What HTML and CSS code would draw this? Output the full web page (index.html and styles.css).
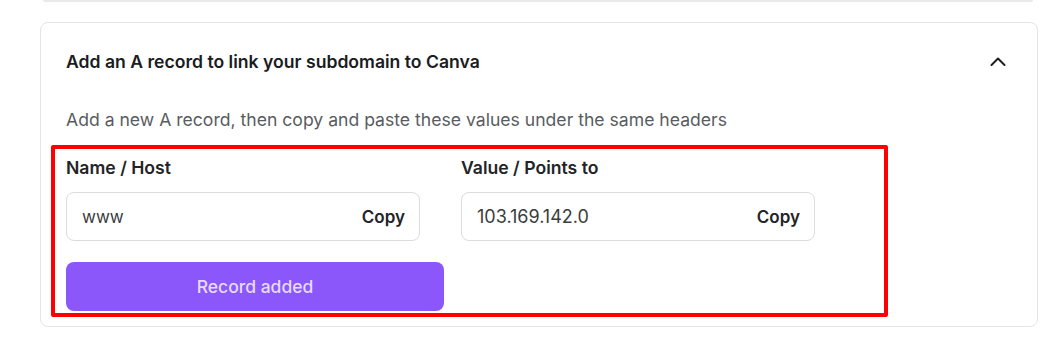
FILE: index.html
```html
<!DOCTYPE html>
<html>
<head>
    <title>Connect subdomain</title>
    <link rel="stylesheet" href="styles.css">
</head>
<body>
    <div class="page">
        <div class="prev-card"></div>

        <div class="card">
            <div class="card-header">
                <h2>Add an A record to link your subdomain to Canva</h2>
                <svg class="chevron" width="24" height="24" viewBox="0 0 24 24">
                    <path d="M5.5 15 L12 8.5 L18.5 15" fill="none" stroke="#1e1e1e" stroke-width="2" stroke-linecap="round" stroke-linejoin="round"/>
                </svg>
            </div>

            <p class="hint">Add a new A record, then copy and paste these values under the same headers</p>

            <div class="highlight">
                <div class="fields">
                    <div class="field">
                        <label>Name / Host</label>
                        <div class="value-box">
                            <span class="value">www</span>
                            <span class="copy">Copy</span>
                        </div>
                    </div>
                    <div class="field">
                        <label>Value / Points to</label>
                        <div class="value-box">
                            <span class="value ip">103.169.142.0</span>
                            <span class="copy">Copy</span>
                        </div>
                    </div>
                </div>
                <button class="added">Record added</button>
            </div>
        </div>
    </div>
</body>
</html>
```
FILE: styles.css
```css
body {
    margin: 0;
    font-family: Inter, "Noto Sans", sans-serif;
    background-color: #fff;
    color: #1d1f21;
}

.page {
    padding: 0 15px 0 40px;
}

.prev-card {
    height: 2px;
    margin: 0 5px 20px 3px;
    background-color: #e9e9e9;
    border-radius: 0 0 6px 6px;
}

.card {
    border: 1px solid #e4e4e4;
    border-radius: 8px;
    padding: 27px 25px 9px 25px;
}

.card-header {
    display: flex;
    justify-content: space-between;
    align-items: center;
}

.card-header h2 {
    margin: 0;
    font-size: 17.6px;
    line-height: 24px;
    font-weight: 600;
    color: #1a1c1e;
}

.chevron {
    margin-right: 2px;
}

.hint {
    margin: 34px 0 0 0;
    font-size: 17.6px;
    line-height: 24px;
    color: #595c5f;
}

.highlight {
    margin: 13px 0 0 -15px;
    width: 837px;
    box-sizing: border-box;
    border: 4px solid #ff0000;
    border-radius: 2px;
    padding: 7px 11px 2px 11px;
}

.fields {
    display: grid;
    grid-template-columns: 354px 354px;
    column-gap: 41px;
}

.field label {
    display: block;
    font-size: 17.6px;
    line-height: 24px;
    font-weight: 600;
    color: #222426;
    margin-bottom: 12px;
}

.value-box {
    display: flex;
    justify-content: space-between;
    align-items: center;
    height: 49px;
    box-sizing: border-box;
    border: 1px solid #dcdcdc;
    border-radius: 8px;
    padding: 0 14px 0 15px;
}

.value {
    font-size: 17px;
    color: #3a3c3e;
}

.value.ip {
    font-size: 18px;
}

.copy {
    font-size: 17px;
    font-weight: 600;
    color: #222426;
}

button.added {
    display: block;
    margin-top: 21px;
    width: 378px;
    height: 49px;
    border: none;
    border-radius: 8px;
    background-color: #8b57fa;
    color: #e7dcff;
    font-family: Inter, "Noto Sans", sans-serif;
    font-size: 17.5px;
    font-weight: 500;
    cursor: pointer;
}
```
